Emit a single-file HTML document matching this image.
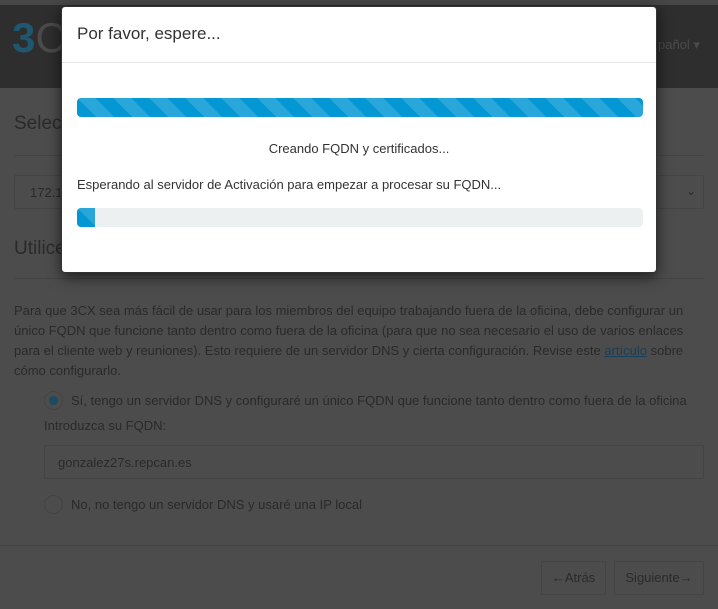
<!DOCTYPE html>
<html style="background:#4c4c4c"><head><style>
*{box-sizing:border-box;margin:0;padding:0}
body{width:718px;height:609px;overflow:hidden;background:#4c4c4c;font-family:"Liberation Sans",sans-serif;position:relative;color:#2a2a2a}
.abs{position:absolute}
.hdr{left:0;top:5px;width:718px;height:83px;background:#2e2e2e}
.top{left:0;top:0;width:718px;height:5px;background:#474747}
.modal{left:61px;top:6px;width:596px;height:267px;background:#fff;border-radius:4px;box-shadow:0 4px 14px rgba(0,0,0,.6);border:1px solid #333}
.bar{left:15px;height:19px;border-radius:4px;background:#edf0f1;overflow:hidden}
.stripe{height:100%;background-color:#0397d3;background-image:linear-gradient(45deg,rgba(255,255,255,.15) 25%,transparent 25%,transparent 50%,rgba(255,255,255,.15) 50%,rgba(255,255,255,.15) 75%,transparent 75%,transparent);background-size:36px 36px}
.t13{font-size:13px}
.line{height:1px;background:#444}
.box{border:1px solid #444;border-radius:2px}
.radio{width:19px;height:19px;border-radius:50%;border:1px solid #444}
</style></head><body>
<div class="abs top"></div>
<div class="abs hdr"></div>
<div class="abs" style="left:12px;top:14px;font-size:42px;color:#1f5670;font-weight:bold">3<span style="color:#4a4a4a;font-weight:normal">C</span></div>
<div class="abs" style="left:658px;top:37px;font-size:13px;color:#4a4a4a">pañol ▾</div>
<div class="abs" style="left:14px;top:113px;font-size:19px">Selecc</div>
<div class="abs line" style="left:14px;top:155px;width:690px"></div>
<div class="abs box" style="left:14px;top:175px;width:690px;height:34px"></div>
<div class="abs t13" style="left:30px;top:185px">172.1</div>
<div class="abs" style="left:686px;top:184px;font-size:12px">⌄</div>
<div class="abs" style="left:14px;top:238px;font-size:19px">Utilice</div>
<div class="abs line" style="left:14px;top:278px;width:690px"></div>
<div class="abs t13" style="left:14px;top:301px;width:694px;line-height:20px">Para que 3CX sea más fácil de usar para los miembros del equipo trabajando fuera de la oficina, debe configurar un único FQDN que funcione tanto dentro como fuera de la oficina (para que no sea necesario el uso de varios enlaces para el cliente web y reuniones). Esto requiere de un servidor DNS y cierta configuración. Revise este <span style="color:#183f57;text-decoration:underline">artículo</span> sobre cómo configurarlo.</div>
<div class="abs radio" style="left:44px;top:391px"><div style="width:9px;height:9px;border-radius:50%;background:#1a4b62;margin:4px"></div></div>
<div class="abs t13" style="left:71px;top:393px">Sí, tengo un servidor DNS y configuraré un único FQDN que funcione tanto dentro como fuera de la oficina</div>
<div class="abs t13" style="left:44px;top:418px">Introduzca su FQDN:</div>
<div class="abs box" style="left:44px;top:445px;width:660px;height:34px"></div>
<div class="abs t13" style="left:58px;top:455px">gonzalez27s.repcan.es</div>
<div class="abs radio" style="left:44px;top:495px"></div>
<div class="abs t13" style="left:71px;top:497px">No, no tengo un servidor DNS y usaré una IP local</div>
<div class="abs line" style="left:0;top:545px;width:718px"></div>
<div class="abs box t13" style="left:541px;top:561px;width:65px;height:34px;text-align:center;line-height:32px">←Atrás</div>
<div class="abs box t13" style="left:614px;top:561px;width:90px;height:34px;text-align:center;line-height:32px">Siguiente→</div>

<div class="abs modal">
<div class="abs" style="left:15px;top:17px;font-size:17px;color:#333">Por favor, espere...</div>
<div class="abs" style="left:0;top:55px;width:594px;height:1px;background:#e5e5e5"></div>
<div class="abs bar" style="top:91px;width:566px"><div class="stripe" style="width:100%"></div></div>
<div class="abs t13" style="left:0;width:594px;top:134px;text-align:center;color:#333">Creando FQDN y certificados...</div>
<div class="abs t13" style="left:15px;top:170px;color:#333">Esperando al servidor de Activación para empezar a procesar su FQDN...</div>
<div class="abs bar" style="top:201px;width:566px"><div class="stripe" style="width:18px"></div></div>
</div>
</body></html>
